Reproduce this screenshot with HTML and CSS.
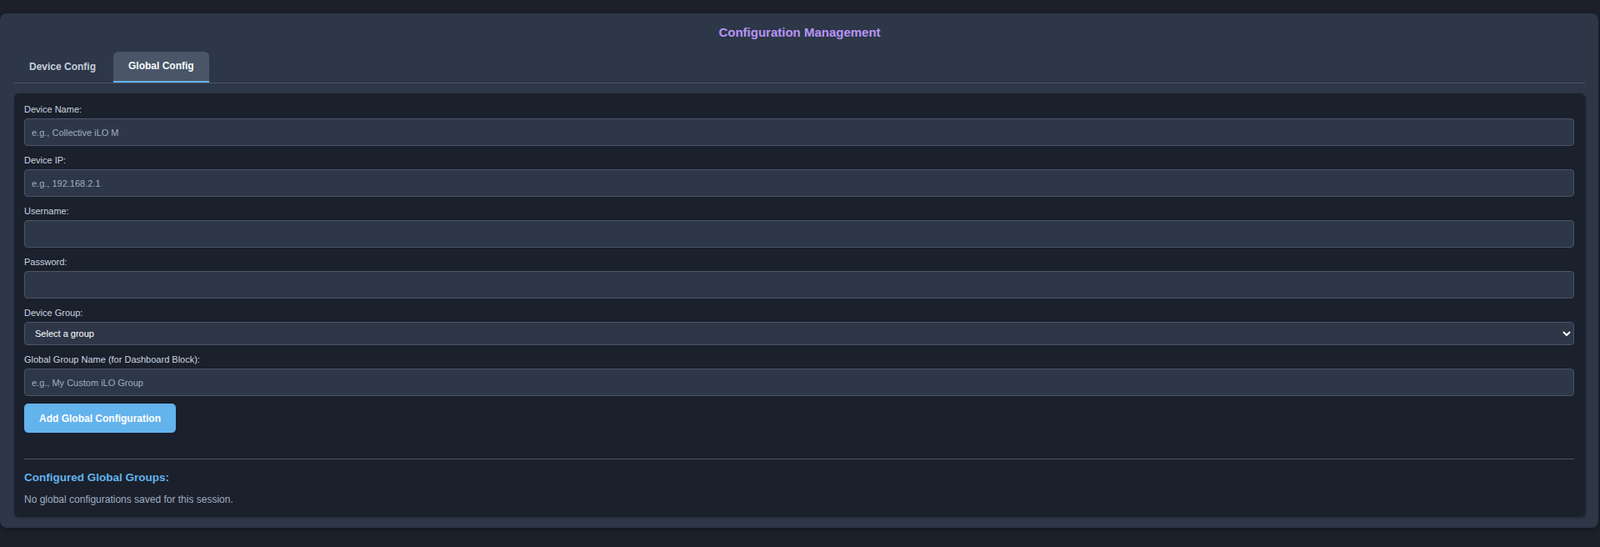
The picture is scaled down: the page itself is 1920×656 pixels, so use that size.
FILE: index.html
```html
<!DOCTYPE html>
<html lang="en">
<head>
<meta charset="utf-8">
<title>Configuration Management</title>
<link rel="stylesheet" href="styles.css">
</head>
<body>
<div class="page">
  <section class="panel">
    <h2 class="title">Configuration Management</h2>
    <nav class="tabs">
      <button class="tab">Device Config</button>
      <button class="tab active">Global Config</button>
    </nav>
    <div class="content">
      <div class="field">
        <label class="label">Device Name:</label>
        <input class="input" type="text" placeholder="e.g., Collective iLO M">
      </div>
      <div class="field">
        <label class="label">Device IP:</label>
        <input class="input" type="text" placeholder="e.g., 192.168.2.1">
      </div>
      <div class="field">
        <label class="label">Username:</label>
        <input class="input" type="text">
      </div>
      <div class="field">
        <label class="label">Password:</label>
        <input class="input" type="password">
      </div>
      <div class="field">
        <label class="label">Device Group:</label>
        <div class="select-wrap">
          <select class="select">
            <option>Select a group</option>
          </select>
          <svg class="chevron" width="10" height="7" viewBox="0 0 10 7"><polyline points="1.5,1.5 5,5 8.5,1.5" fill="none" stroke="#ffffff" stroke-width="2" stroke-linecap="round" stroke-linejoin="round"/></svg>
        </div>
      </div>
      <div class="field last">
        <label class="label">Global Group Name (for Dashboard Block):</label>
        <input class="input" type="text" placeholder="e.g., My Custom iLO Group">
      </div>
      <button class="primary">Add Global Configuration</button>
      <hr class="divider">
      <h3 class="subhead">Configured Global Groups:</h3>
      <p class="empty">No global configurations saved for this session.</p>
    </div>
  </section>
</div>
</body>
</html>
```
FILE: styles.css
```css
* { box-sizing: border-box; }
html, body { margin: 0; padding: 0; }
body {
  background: #1b202b;
  font-family: "Liberation Sans", Arial, sans-serif;
  color: #cbd5e0;
}
.page {
  padding: 16px 2px 24px 0;
}
.panel {
  background: #2d3748;
  border-radius: 8px;
  padding: 14px 16px 13px 17px;
  box-shadow: 0 2px 6px rgba(0,0,0,0.3);
}
.title {
  margin: 0;
  text-align: center;
  font-size: 15px;
  line-height: 18px;
  font-weight: bold;
  color: #b794f4;
}
.tabs {
  display: flex;
  gap: 3px;
  margin-top: 14px;
  border-bottom: 1px solid #4a5568;
}
.tab {
  font-family: inherit;
  font-size: 12px;
  line-height: 14px;
  font-weight: bold;
  color: #c5cdd9;
  background: transparent;
  border: none;
  border-bottom: 2px solid transparent;
  border-radius: 6px 6px 0 0;
  padding: 11px 18px 10px;
  cursor: pointer;
}
.tab.active {
  background: #4a5568;
  color: #f7fafc;
  border-bottom-color: #63b3ed;
  padding-top: 10px;
  padding-bottom: 11px;
}
.content {
  margin-top: 12px;
  background: #1a202c;
  border-radius: 6px;
  padding: 13px 13px 14px 12px;
  box-shadow: 1px 1px 3px rgba(0,0,0,0.35);
}
.field {
  margin-bottom: 11px;
}
.field.last {
  margin-bottom: 9px;
}
.label {
  display: block;
  font-size: 11px;
  line-height: 13px;
  color: #cbd5e0;
  margin-bottom: 4px;
}
.input {
  display: block;
  width: 100%;
  height: 33px;
  padding: 0 8px;
  background: #2d3748;
  border: 1px solid #4a5568;
  border-radius: 4px;
  font-family: inherit;
  font-size: 11px;
  color: #e2e8f0;
}
.input::placeholder {
  color: #a0aec0;
}
.select-wrap {
  position: relative;
}
.select {
  display: block;
  width: 100%;
  height: 28px;
  padding: 0 12px;
  background: #2d3748;
  border: 1px solid #4a5568;
  border-radius: 4px;
  font-family: inherit;
  font-size: 11px;
  font-weight: normal;
  color: #ffffff;
  appearance: none;
  -webkit-appearance: none;
}
.chevron {
  position: absolute;
  right: 4px;
  top: 11px;
  pointer-events: none;
}
.primary {
  display: block;
  height: 35px;
  padding: 0 18px;
  background: #63b3ed;
  color: #ffffff;
  border: none;
  border-radius: 5px;
  font-family: inherit;
  font-size: 12px;
  font-weight: bold;
  cursor: pointer;
}
.divider {
  margin: 31px 0 0;
  border: none;
  border-top: 1px solid #4a5568;
  width: 100%;
}
.subhead {
  margin: 13px 0 0;
  font-size: 13.5px;
  line-height: 17px;
  font-weight: bold;
  color: #63b3ed;
}
.empty {
  margin: 11px 0 0;
  font-size: 12px;
  line-height: 14px;
  color: #a0aec0;
}
```
